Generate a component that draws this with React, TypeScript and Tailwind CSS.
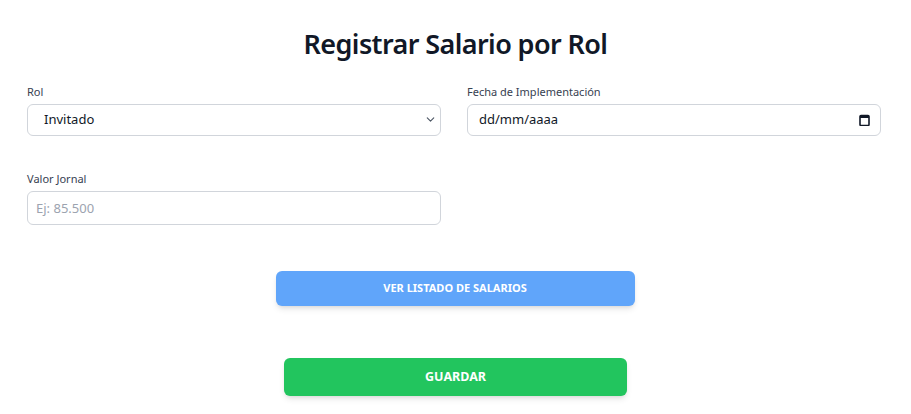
import { ChevronDown } from 'lucide-react';

export default function App() {
    return (
        <div className="min-h-screen bg-white font-['Noto_Sans',sans-serif] text-gray-900">
            {/* Encabezado */}
            <h1 className="pt-[24px] text-center text-[27px] font-semibold leading-[40px] tracking-[-0.6px] text-[#111827]">
                Registrar Salario por Rol
            </h1>

            {/* Formulario */}
            <div className="mt-[21px] grid grid-cols-2 gap-x-[26px] gap-y-[36px] pl-[27px] pr-[30px]">
                <div className="flex flex-col gap-[5px]">
                    <label className="text-[11px] leading-[14px] text-[#374151]">Rol</label>
                    <div className="relative">
                        <select className="h-[32px] w-full appearance-none rounded-md border border-[#d1d5db] bg-white pl-[16px] text-[13px] text-[#111827] outline-none">
                            <option>Invitado</option>
                        </select>
                        <ChevronDown size={13} className="pointer-events-none absolute right-[4px] top-[9px] text-[#4b5563]" />
                    </div>
                </div>

                <div className="flex flex-col gap-[5px]">
                    <label className="text-[11px] leading-[14px] text-[#374151]">Fecha de Implementación</label>
                    <div className="flex h-[32px] items-center justify-between rounded-md border border-[#d1d5db] bg-white pl-[11px] pr-[10px] text-[13px] text-[#111827]">
                        <span>dd/mm/aaaa</span>
                        <svg width="11" height="12" viewBox="0 0 11 12" fill="none">
                            <rect x="1" y="1.5" width="9" height="10" rx="1" stroke="#111827" strokeWidth="1.6" />
                            <rect x="1" y="1" width="9" height="3" fill="#111827" />
                        </svg>
                    </div>
                </div>

                <div className="flex flex-col gap-[5px]">
                    <label className="text-[11px] leading-[14px] text-[#374151]">Valor Jornal</label>
                    <input
                        type="text"
                        placeholder="Ej: 85.500"
                        className="h-[34px] w-full rounded-md border border-[#d1d5db] bg-white px-[8px] text-[13px] text-[#111827] outline-none placeholder:text-[#9ca3af]"
                    />
                </div>
            </div>

            {/* Acciones */}
            <div className="mt-[46px] flex flex-col items-center">
                <button className="ml-[-1px] h-[35px] w-[359px] rounded-md bg-[#60a5fa] text-[11px] font-bold uppercase text-white shadow-md">
                    Ver listado de salarios
                </button>
                <button className="mt-[52px] h-[38px] w-[343px] rounded-md bg-[#22c55e] text-[12.5px] font-bold uppercase text-white shadow-md">
                    Guardar
                </button>
            </div>
        </div>
    );
}
